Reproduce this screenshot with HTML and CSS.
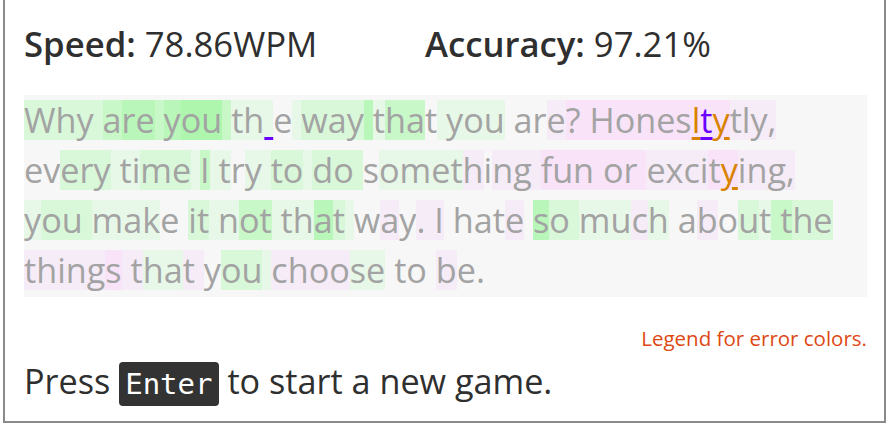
FILE: index.html
```html
<!DOCTYPE html>
<html lang="en">
<head>
<meta charset="utf-8">
<title>Typing game</title>
<link rel="stylesheet" href="styles.css">
</head>
<body>
<div class="game">
  <div class="stats">
    <div class="stat stat-speed"><b>Speed:</b> 78.86WPM</div>
    <div class="stat"><b>Accuracy:</b> 97.21%</div>
  </div>
  <div class="text">
    <div class="line"><span class="g1">Why </span><span class="g2">a</span><span class="g3">re</span><span class="g2"> </span><span class="g3">y</span><span class="g4">ou</span><span class="g2"> </span><span class="g0">th</span><span class="g0 miss"> </span><span class="n">e</span><span class="g0"> </span><span class="g1">way</span><span class="g3"> </span><span class="g0">t</span><span class="g2">ha</span><span class="n">t</span><span class="g0"> you</span><span class="n"> ar</span><span class="p0">e</span><span class="p1">? Hones</span><span class="p1 err o">l</span><span class="p1 err v">t</span><span class="p1 err o">y</span><span class="p0">tly,</span></div>
    <div class="line"><span class="n">ev</span><span class="g1">ery</span><span class="g0"> ti</span><span class="g1">me</span><span class="g0"> </span><span class="g2">I</span><span class="g0"> t</span><span class="n">r</span><span class="g0">y </span><span class="g1">to</span><span class="g0"> </span><span class="g1">do </span><span class="n">s</span><span class="g0">omet</span><span class="p0">h</span><span class="n">i</span><span class="p0">ng </span><span class="p1">fun or </span><span class="p0">exci</span><span class="p1">t</span><span class="p1 err o">y</span><span class="p0">ing,</span></div>
    <div class="line"><span class="g0">y</span><span class="g1">ou </span><span class="g0">mak</span><span class="n">e </span><span class="g1">it</span><span class="g0"> n</span><span class="g2">ot</span><span class="g0"> th</span><span class="g3">a</span><span class="g1">t</span><span class="g0"> </span><span class="n">w</span><span class="p0">a</span><span class="n">y</span><span class="p0">. I</span><span class="n"> hat</span><span class="p0">e</span><span class="n"> </span><span class="g3">s</span><span class="g1">o </span><span class="g0">mu</span><span class="p0">c</span><span class="g0">h</span><span class="n"> a</span><span class="p0">b</span><span class="n">o</span><span class="g1">u</span><span class="g0">t</span><span class="g2"> t</span><span class="g1">he</span></div>
    <div class="line"><span class="p0">thing</span><span class="p1">s</span><span class="p0"> t</span><span class="g0">ha</span><span class="p0">t </span><span class="n">y</span><span class="g1">ou</span><span class="g0"> </span><span class="p0">choo</span><span class="g0">se</span><span class="n"> to </span><span class="p0">b</span><span class="n">e.</span></div>
  </div>
  <div class="legend">Legend for error colors.</div>
  <div class="restart">Press <kbd class="key">Enter</kbd> to start a new game.</div>
</div>
</body>
</html>
```

FILE: styles.css
```css
html, body {
  margin: 0;
  padding: 0;
  background: #fff;
}

body {
  font-family: "Open Sans", "Noto Sans", sans-serif;
  color: #333;
}

.game {
  box-sizing: border-box;
  height: 423px;
  margin: 0 1px 0 3px;
  border: 2px solid #8a8a8a;
  border-top: none;
  padding: 19px 17px 0 19px;
}

.stats {
  display: flex;
  font-size: 34.7px;
  line-height: 50px;
  color: #2f2f2f;
}

.stat-speed {
  width: 401px;
}

.stat b {
  font-weight: 600;
}

.text {
  margin-top: 26px;
  background: #f7f7f7;
  padding-bottom: 2px;
  font-size: 34.2px;
  color: #a3a3a3;
}

.line {
  height: 50px;
  display: flex;
  align-items: center;
}

.line span {
  white-space: pre;
  height: 40px;
  line-height: 40px;
}

.g0 { background: #e8f8e8; }
.g1 { background: #d9f8d9; }
.g2 { background: #c8f7c8; }
.g3 { background: #b9f6b9; }
.g4 { background: #aef6ae; }
.p0 { background: #f6ecf8; }
.p1 { background: #f8e3f8; }

.err {
  text-decoration: underline;
  text-decoration-thickness: 3px;
  text-underline-offset: 4px;
}

.o { color: #d98200; }
.v { color: #6a00ff; }

.miss {
  text-decoration: underline;
  text-decoration-color: #6a00ff;
  text-decoration-thickness: 3px;
  text-underline-offset: 4px;
}

.legend {
  margin-top: 28px;
  text-align: right;
  font-size: 20.5px;
  line-height: 26px;
  color: #dd4814;
}

.restart {
  margin-top: 5px;
  font-size: 34.2px;
  line-height: 50px;
  color: #2f2f2f;
}

.key {
  display: inline-block;
  background: #333;
  color: #fff;
  font-family: "DejaVu Sans Mono", monospace;
  font-size: 29px;
  line-height: 44px;
  padding: 0 6px;
  border-radius: 4px;
}
```
